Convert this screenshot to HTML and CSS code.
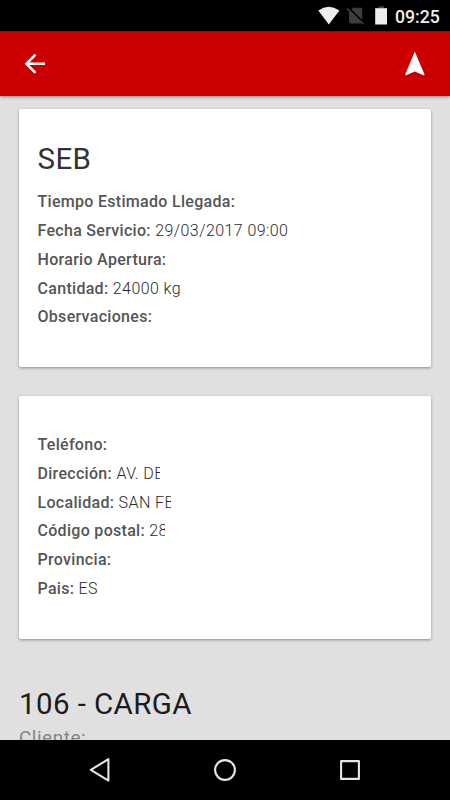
FILE: index.html
```html
<!DOCTYPE html>
<html lang="es">
<head>
<meta charset="utf-8">
<title>Servicio</title>
<link rel="stylesheet" href="styles.css">
</head>
<body>
<div class="screen">
  <div class="status">
    <svg class="status-icons" width="80" height="31" viewBox="0 0 80 31">
      <path d="M0.3 10.4Q10.8 3.1 21.4 10.4L10.8 24.4Z" fill="#eee"/>
      <path d="M35 7.7H44.2V23.4H33a2 2 0 0 1-2-2V11.7Z" fill="#3d3d3d"/>
      <path d="M29.6 7.5L46.4 24.3" stroke="#000" stroke-width="3"/>
      <path d="M29 8.5L45.4 24.3" stroke="#484848" stroke-width="1.4"/>
      <path d="M60.5 6.3H66V8.3H60.5Z" fill="#444"/>
      <path d="M57.2 8.2H69V24.5H57.2Z" fill="#eee"/>
    </svg>
    <span class="time">09:25</span>
  </div>
  <header class="bar">
    <svg class="back" width="22" height="22" viewBox="0 0 22 22"><path d="M21 10.8H2.5M11.5 1.7L2.4 10.8L11.5 19.9" fill="none" stroke="#fff" stroke-width="2.5"/></svg>
    <svg class="nav" width="20" height="26" viewBox="0 0 20 26"><path d="M9.8 0.6L19.5 23.5Q19.4 24.5 18.4 24.2L9.8 20.6L1.2 24.2Q0.2 24.5 0.2 23.5Z" fill="#fff"/></svg>
  </header>
  <main class="content">
    <section class="card">
      <h1>SEB</h1>
      <p><b>Tiempo Estimado Llegada:</b></p>
      <p><b>Fecha Servicio:</b> 29/03/2017 09:00</p>
      <p><b>Horario Apertura:</b></p>
      <p><b>Cantidad:</b> 24000 kg</p>
      <p><b>Observaciones:</b></p>
    </section>
    <section class="card contact">
      <p><b>Teléfono:</b></p>
      <p class="clip street"><b>Dirección:</b> AV. DE</p>
      <p class="clip town"><b>Localidad:</b> SAN FE</p>
      <p class="clip zip"><b>Código postal:</b> 28</p>
      <p><b>Provincia:</b></p>
      <p><b>Pais:</b> ES</p>
    </section>
    <section class="next">
      <h2>106 - CARGA</h2>
      <div class="client">Cliente:</div>
    </section>
  </main>
  <nav class="buttons">
    <svg width="22" height="26" viewBox="0 0 22 26"><path d="M19.4 2.2V23.6L1.8 12.9Z" fill="none" stroke="#e6e6e6" stroke-width="2.1" stroke-linejoin="round"/></svg>
    <svg width="24" height="24" viewBox="0 0 24 24"><circle cx="12" cy="12" r="9.9" fill="none" stroke="#e6e6e6" stroke-width="2.1"/></svg>
    <svg width="22" height="22" viewBox="0 0 22 22"><rect x="2.1" y="2.1" width="17.8" height="17.8" fill="none" stroke="#e6e6e6" stroke-width="2.1" stroke-linejoin="round"/></svg>
  </nav>
</div>
</body>
</html>
```
FILE: styles.css
```css
* { box-sizing: border-box; margin: 0; padding: 0; }
body { font-family: Roboto, sans-serif; background: #e0e0e0; }
svg { display: block; }
.screen { width: 450px; height: 800px; display: flex; flex-direction: column; overflow: hidden; }
.status { height: 31px; flex: none; background: #000; display: flex; justify-content: flex-end; align-items: center; padding-right: 10px; }
.time { width: 45px; padding-top: 2px; color: #eee; font-size: 17.7px; font-weight: 500; line-height: 24px; white-space: nowrap; }
.status-icons { margin-right: -3px; }
.bar { position: relative; z-index: 1; height: 65px; flex: none; background: #c00; display: flex; justify-content: space-between; align-items: center; padding: 0 25px 0 24px; box-shadow: 0 1px 3px rgba(0,0,0,.4), inset 0 1px 1px rgba(0,0,0,.2); }
.content { flex: 1; min-height: 0; overflow: hidden; background: #e0e0e0; padding-top: 13px; }
.card { width: 412px; height: 258px; margin-left: 19px; padding: 32px 18.5px; background: #fff; border-radius: 2px; box-shadow: 0 1px 3px rgba(0,0,0,.38); }
h1, h2 { font-size: 29.5px; line-height: 36px; font-weight: 400; color: #333; letter-spacing: .4px; }
h1 { margin-bottom: 11.4px; }
.card p { font-size: 16px; line-height: 28.75px; height: 28.75px; font-weight: 300; color: #2a2a2a; letter-spacing: .42px; white-space: nowrap; }
.card b { font-weight: 500; color: #555; letter-spacing: .3px; }
.contact { height: 243px; margin-top: 29px; padding-top: 35.1px; }
.card .clip { overflow: hidden; }
.card .street { width: 122.5px; }
.card .town { width: 133.5px; }
.card .zip { width: 127px; }
.next { margin-top: 29px; padding: 16.6px 19px 0; border-top: 1px solid #dcdcdc; }
h2 { color: #1c1c1c; }
.client { font-size: 19px; line-height: 24px; margin-top: 4.5px; color: #858585; letter-spacing: .5px; }
.buttons { height: 60px; flex: none; background: #000; display: flex; justify-content: space-between; align-items: center; padding: 0 89px; }
```
